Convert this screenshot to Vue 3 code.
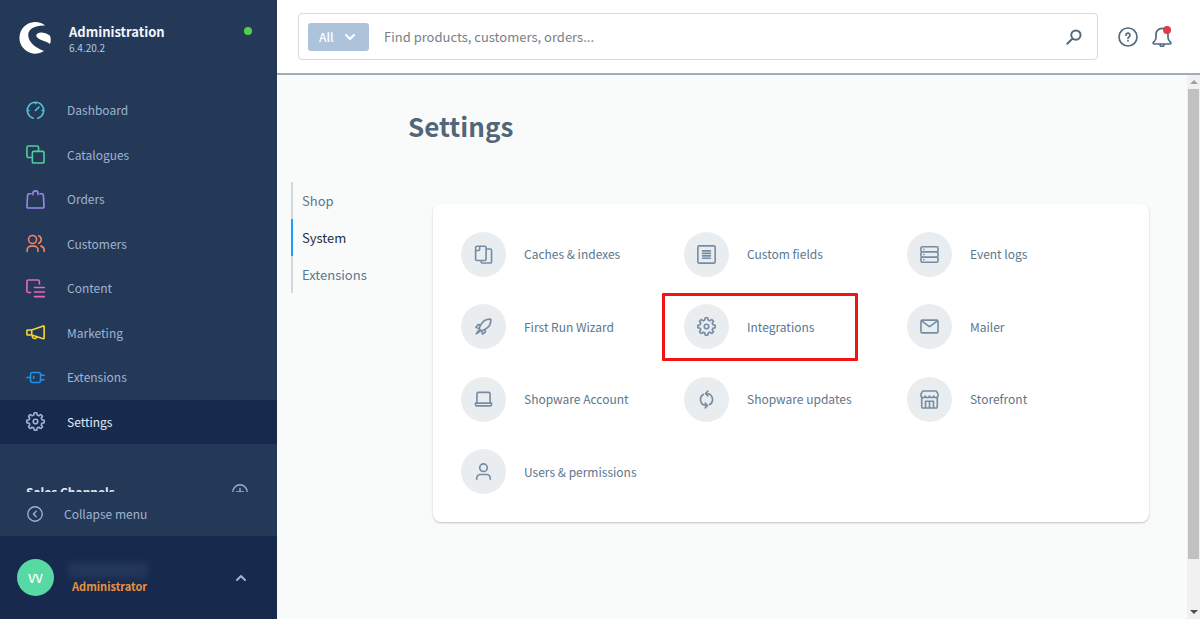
<script setup>
import { ref } from 'vue'

const point = (radius, degrees) => {
  const angle = (degrees * Math.PI) / 180
  return `${(10 + radius * Math.cos(angle)).toFixed(2)} ${(10 + radius * Math.sin(angle)).toFixed(2)}`
}

// eight rounded teeth with hollow valleys between them
const gear = Array.from({ length: 8 }, (_, i) => {
  const a = i * 45
  return `${i ? 'L' : 'M'}${point(7.4, a - 12)}Q${point(9.4, a - 11)} ${point(9.2, a - 5)}L${point(9.2, a + 5)}Q${point(9.4, a + 11)} ${point(7.4, a + 12)}Q${point(6.3, a + 22.5)} ${point(7.4, a + 33)}`
}).join('') + 'Z'

const icons = {
  gauge: 'M7.5 18.2A8.6 8.6 0 1 1 12.5 18.2M10 10l3.6-3.6M10 1.5v1.3M1.5 10h1.6M16.9 10h1.6',
  copy: 'M6.7 13.2H2.5A1.5 1.5 0 0 1 1 11.7V2.5A1.5 1.5 0 0 1 2.5 1h9.2a1.5 1.5 0 0 1 1.5 1.5v4.2M8.2 6.7h9.3A1.5 1.5 0 0 1 19 8.2v9.3a1.5 1.5 0 0 1-1.5 1.5H8.2a1.5 1.5 0 0 1-1.5-1.5V8.2a1.5 1.5 0 0 1 1.5-1.5z',
  bag: 'M5.3 4H3.2a1.5 1.5 0 0 0-1.5 1.4L1 17.3A1.6 1.6 0 0 0 2.6 19h14.8a1.6 1.6 0 0 0 1.6-1.7L18.3 5.4A1.5 1.5 0 0 0 16.8 4h-2.1M7.3 5V3.6a2.7 2.7 0 0 1 5.4 0V5',
  users: 'M6.9 1.6a4.2 4.2 0 1 1 0 8.4 4.2 4.2 0 0 1 0-8.4M1.2 18.3v-1.5a4 4 0 0 1 4-4h3.4a4 4 0 0 1 4 4v1.5M13.4 1.9a4.3 4.3 0 0 1 0 7.9M15.6 12.8a4.2 4.2 0 0 1 3.5 4v1.5',
  content: 'M4.8 14.2H2.6A1.6 1.6 0 0 1 1 12.6v-10A1.6 1.6 0 0 1 2.6 1h9.9a1.6 1.6 0 0 1 1.6 1.6v2.6M9 9h10.3M9 13.7h10.3M9 18.5h10.3',
  megaphone: 'M1.7 7.3H6v5.4H1.7a.7.7 0 0 1-.7-.7V8a.7.7 0 0 1 .7-.7zM6 7.3l12.2-4.2a.7.7 0 0 1 .9.7v12a.7.7 0 0 1-.9.7L6 12.7M6.6 13v1.3a2.5 2.5 0 0 0 4.8.5',
  plug: 'M.8 10h4M8.1 9v2M15.3 7.6h3.9M15.3 12.4h3.9M6.6 4.8h6.9a1.8 1.8 0 0 1 1.8 1.8v6.8a1.8 1.8 0 0 1-1.8 1.8H6.6a1.8 1.8 0 0 1-1.8-1.8V6.6a1.8 1.8 0 0 1 1.8-1.8z',
  gear: gear + 'M10 7.6a2.4 2.4 0 1 1 0 4.8 2.4 2.4 0 0 1 0-4.8',
  plus: 'M10 1a9 9 0 1 1 0 18 9 9 0 0 1 0-18M10 5.5v9M5.5 10h9',
  back: 'M10 1a9 9 0 1 1 0 18 9 9 0 0 1 0-18M11.5 6.5 8 10l3.5 3.5',
  search: 'M12.4 1.8a5.8 5.8 0 1 1 0 11.6 5.8 5.8 0 0 1 0-11.6M8.2 11.9 1.6 18.4',
  help: 'M10 1a9 9 0 1 1 0 18 9 9 0 0 1 0-18M8 8.2a2 2 0 1 1 3 1.7c-.7.4-1 .7-1 1.4M10 13.6v.2',
  bell: 'M10 1.3a6 6 0 0 0-6 6v3.3c0 1.9-.7 3.2-2.3 4.4-1 .8-.6 2 .6 2h15.4c1.2 0 1.6-1.2.6-2-1.6-1.2-2.3-2.5-2.3-4.4V7.3a6 6 0 0 0-6-6M8 17.5a2 2 0 0 0 4 0',
  documents: 'M6 1.3h5.2a1.5 1.5 0 0 1 1.5 1.5v12a1.5 1.5 0 0 1-1.5 1.5h-8a1.5 1.5 0 0 1-1.5-1.5V2.8a1.5 1.5 0 0 1 1.5-1.5zM1.9 5.8h2.8A1.3 1.3 0 0 0 6 4.5V1.4M12.7 4.2H17a1.5 1.5 0 0 1 1.5 1.5v11.8A1.5 1.5 0 0 1 17 19H9a1.5 1.5 0 0 1-1.5-1.5v-1.2',
  rocket: 'M17.7 2.3c.3 4.2-1.3 8-6 10.6L8 14.8 5.2 12l1.9-3.7c2.6-4.7 6.4-6.3 10.6-6zM7.1 8.3 4.2 8 2 11.1l3.4.8M11.7 12.9l.3 2.9L8.9 18l-.8-3.4M5 13.8 2.4 17.6 6.2 15',
  list: 'M2.4.9h15.2a1.5 1.5 0 0 1 1.5 1.5v15.2a1.5 1.5 0 0 1-1.5 1.5H2.4a1.5 1.5 0 0 1-1.5-1.5V2.4A1.5 1.5 0 0 1 2.4.9zM5.8 6.2h8.4M5.8 8.8h8.4M5.8 11.4h8.4M5.8 14h8.4',
  server: 'M2.5 1.8h15A1.5 1.5 0 0 1 19 3.3v2.4a1.5 1.5 0 0 1-1.5 1.5h-15A1.5 1.5 0 0 1 1 5.7V3.3a1.5 1.5 0 0 1 1.5-1.5zM2.5 7.2h15A1.5 1.5 0 0 1 19 8.7v2.6a1.5 1.5 0 0 1-1.5 1.5h-15A1.5 1.5 0 0 1 1 11.3V8.7a1.5 1.5 0 0 1 1.5-1.5zM2.5 12.8h15a1.5 1.5 0 0 1 1.5 1.5v2.4a1.5 1.5 0 0 1-1.5 1.5h-15A1.5 1.5 0 0 1 1 16.7v-2.4a1.5 1.5 0 0 1 1.5-1.5zM4 4.5h.1M4 10h.1M4 15.5h.1',
  mail: 'M2.5 3.3h15A1.5 1.5 0 0 1 19 4.8v10.4a1.5 1.5 0 0 1-1.5 1.5h-15A1.5 1.5 0 0 1 1 15.2V4.8a1.5 1.5 0 0 1 1.5-1.5zM1.4 3.9l7.7 5.7a1.5 1.5 0 0 0 1.8 0l7.7-5.7',
  laptop: 'M4.6 2.5h10.8a1.5 1.5 0 0 1 1.5 1.5v9.8H3.1V4a1.5 1.5 0 0 1 1.5-1.5zM1.5 13.8h17v1.4a1.5 1.5 0 0 1-1.5 1.5H3a1.5 1.5 0 0 1-1.5-1.5z',
  refresh: 'M6.6 4.7a6.3 6.3 0 0 0 3.4 11.6M8.6 13.8l2.5 2.5-2.5 2.5M13.4 15.3a6.3 6.3 0 0 0-3.4-11.6M11.4 1.2 8.9 3.7l2.5 2.5',
  store: 'M3 1h14l2 3.3v2a2.3 2.3 0 0 1-4.5 0 2.3 2.3 0 0 1-4.5 0 2.3 2.3 0 0 1-4.5 0 2.3 2.3 0 0 1-4.5 0v-2zM1.8 8.5v9A1.5 1.5 0 0 0 3.3 19h13.4a1.5 1.5 0 0 0 1.5-1.5v-9M5.8 19v-7.2h8.4V19M10 11.8V19',
  user: 'M10 2a4 4 0 1 1 0 8 4 4 0 0 1 0-8M2.9 18.2v-1.4a3.7 3.7 0 0 1 3.7-3.7h6.8a3.7 3.7 0 0 1 3.7 3.7v1.4',
}

const menu = [
  { label: 'Dashboard', icon: 'gauge', tone: 'cyan' },
  { label: 'Catalogues', icon: 'copy', tone: 'green' },
  { label: 'Orders', icon: 'bag', tone: 'violet' },
  { label: 'Customers', icon: 'users', tone: 'orange' },
  { label: 'Content', icon: 'content', tone: 'pink' },
  { label: 'Marketing', icon: 'megaphone', tone: 'yellow' },
  { label: 'Extensions', icon: 'plug', tone: 'blue' },
  { label: 'Settings', icon: 'gear', tone: 'grey' },
]

const tabs = ['Shop', 'System', 'Extensions']
const activeTab = ref('System')
const query = ref('')

const settings = [
  { label: 'Caches & indexes', icon: 'documents' },
  { label: 'Custom fields', icon: 'list' },
  { label: 'Event logs', icon: 'server' },
  { label: 'First Run Wizard', icon: 'rocket' },
  { label: 'Integrations', icon: 'gear', marked: true },
  { label: 'Mailer', icon: 'mail' },
  { label: 'Shopware Account', icon: 'laptop' },
  { label: 'Shopware updates', icon: 'refresh' },
  { label: 'Storefront', icon: 'store' },
  { label: 'Users & permissions', icon: 'user' },
]
</script>

<template>
  <div class="admin">
    <aside class="sidebar">
      <header class="brand">
        <svg class="logo" viewBox="57 65 97 97" aria-hidden="true">
          <path d="M137 76A48 48 0 1 0 133 153C112 144 86 130 85 105C84 86 108 74 137 76Z" />
          <path d="M109 107C109 95 132 92 151 107C154 115 154 124 151 132C140 122 116 123 109 107Z" />
        </svg>
        <div class="brand-text">
          <strong>Administration</strong>
          <span>6.4.20.2</span>
        </div>
        <span class="status"></span>
      </header>

      <div class="menu-scroll">
        <nav class="menu" aria-label="Main">
          <a
            v-for="item in menu"
            :key="item.label"
            href="#"
            class="menu-item"
            :class="{ active: item.label === 'Settings' }"
          >
            <svg class="icon" :class="item.tone" viewBox="0 0 20 20" aria-hidden="true"><path :d="icons[item.icon]" /></svg>
            <span>{{ item.label }}</span>
          </a>
        </nav>
        <div class="channels">
          <strong>Sales Channels</strong>
          <button type="button" aria-label="Add sales channel">
            <svg class="icon" viewBox="0 0 20 20" aria-hidden="true"><path :d="icons.plus" /></svg>
          </button>
        </div>
      </div>

      <button type="button" class="collapse">
        <svg class="icon" viewBox="0 0 20 20" aria-hidden="true"><path :d="icons.back" /></svg>
        <span>Collapse menu</span>
      </button>

      <button type="button" class="account">
        <span class="avatar">VV</span>
        <span class="account-text">
          <span class="account-name"></span>
          <span class="account-role">Administrator</span>
        </span>
        <svg class="chevron" viewBox="0 0 12 12" aria-hidden="true"><path d="M2 8l4-4 4 4" /></svg>
      </button>
    </aside>

    <div class="page">
      <header class="topbar">
        <div class="search">
          <button type="button" class="scope">
            <span>All</span>
            <svg class="chevron" viewBox="0 0 12 12" aria-hidden="true"><path d="M2 4l4 4 4-4" /></svg>
          </button>
          <input v-model="query" type="text" aria-label="Search" placeholder="Find products, customers, orders..." />
          <button type="button" class="plain find" aria-label="Start search">
            <svg class="icon" viewBox="0 0 20 20" aria-hidden="true"><path :d="icons.search" /></svg>
          </button>
        </div>
        <button type="button" class="plain" aria-label="Help">
          <svg class="icon" viewBox="0 0 20 20" aria-hidden="true"><path :d="icons.help" /></svg>
        </button>
        <button type="button" class="plain bell" aria-label="Notifications">
          <svg class="icon" viewBox="0 0 20 20" aria-hidden="true"><path :d="icons.bell" /></svg>
          <span class="badge"></span>
        </button>
      </header>

      <div class="body">
        <main class="content">
          <h1>Settings</h1>
          <div class="columns">
            <nav class="tabs" aria-label="Settings sections">
              <a
                v-for="tab in tabs"
                :key="tab"
                href="#"
                :class="{ active: tab === activeTab }"
                @click.prevent="activeTab = tab"
              >{{ tab }}</a>
            </nav>
            <section class="card">
              <a
                v-for="item in settings"
                :key="item.label"
                href="#"
                class="tile"
                :class="{ marked: item.marked }"
              >
                <span class="tile-icon">
                  <svg class="icon" viewBox="0 0 20 20" aria-hidden="true"><path :d="icons[item.icon]" /></svg>
                </span>
                <span>{{ item.label }}</span>
              </a>
            </section>
          </div>
        </main>
        <div class="scrollbar" aria-hidden="true">
          <span class="arrow up"></span>
          <span class="track"><span class="thumb"></span></span>
          <span class="arrow down"></span>
        </div>
      </div>
    </div>
  </div>
</template>

<style>
body {
  margin: 0;
}
</style>

<style scoped>
.admin {
  display: flex;
  height: 100vh;
  font-family: "Noto Sans CJK SC", "Noto Sans", sans-serif;
  font-size: 12px;
  line-height: 16px;
  color: #5c768c;
  background: #f9fbfb;
}

.admin *,
.admin *::before,
.admin *::after {
  box-sizing: border-box;
}

a {
  color: inherit;
  text-decoration: none;
}

button,
input {
  padding: 0;
  border: 0;
  background: none;
  font: inherit;
  color: inherit;
  text-align: left;
}

button {
  cursor: pointer;
}

.icon {
  display: block;
  flex: none;
  width: 20px;
  height: 20px;
  fill: none;
  stroke: currentColor;
  stroke-width: 1.7;
  stroke-linecap: round;
  stroke-linejoin: round;
}

.chevron {
  flex: none;
  width: 12px;
  height: 12px;
  fill: none;
  stroke: currentColor;
  stroke-width: 2;
  stroke-linecap: round;
  stroke-linejoin: round;
}

/* sidebar */
.sidebar {
  display: flex;
  flex: none;
  flex-direction: column;
  width: 277px;
  color: #9fb4d2;
  background: #243858;
}

.brand {
  display: flex;
  flex: none;
  align-items: flex-start;
  height: 88px;
  padding: 22px 25px 0 19px;
}

.logo {
  width: 32px;
  height: 32px;
  margin-right: 18px;
  fill: #fff;
}

.brand-text {
  display: flex;
  flex: 1;
  flex-direction: column;
}

.brand-text strong {
  font-size: 13px;
  line-height: 20px;
  color: #f2f5fa;
}

.brand-text span {
  font-size: 10px;
  line-height: 12px;
  color: #b9c8de;
}

.status {
  width: 8px;
  height: 8px;
  margin-top: 5px;
  border-radius: 50%;
  background: #53d048;
}

.menu-scroll {
  flex: 1;
  min-height: 0;
  overflow: hidden;
}

.menu {
  display: grid;
  grid-auto-rows: 1fr;
  min-height: 356px;
}

.menu-item {
  display: flex;
  align-items: center;
  gap: 22px;
  padding-left: 26px;
}

.menu-item .icon,
.tile .icon {
  width: 19px;
  height: 19px;
}

.menu-item.active {
  color: #e4ebf5;
  background: #172a4e;
}

.cyan { color: #56bfdc; }
.green { color: #4fd09a; }
.violet { color: #9a87ea; }
.orange { color: #ee8460; }
.pink { color: #ea66bd; }
.yellow { color: #f5d733; }
.blue { color: #1d92ec; }
.grey { color: #9fb4d2; }

.channels {
  display: flex;
  align-items: center;
  justify-content: space-between;
  padding: 40px 29px 0 26px;
}

.channels strong {
  color: #e4ebf5;
}

.channels .icon {
  width: 16px;
  height: 16px;
}

.collapse {
  display: flex;
  flex: none;
  align-items: center;
  gap: 21px;
  height: 44px;
  padding-left: 27px;
}

.collapse .icon {
  width: 16px;
  height: 16px;
}

.account {
  display: flex;
  flex: none;
  align-items: center;
  height: 83px;
  padding: 0 30px 0 17px;
  background: #172a4e;
}

.avatar {
  width: 37px;
  height: 37px;
  border-radius: 50%;
  font-weight: 500;
  line-height: 37px;
  text-align: center;
  color: #fff;
  background: #57d9a3;
}

.account-text {
  display: flex;
  flex: 1;
  flex-direction: column;
  margin-left: 14px;
}

.account-name {
  width: 80px;
  height: 16px;
  border-radius: 4px;
  background: #23375a;
  filter: blur(3px);
}

.account-role {
  margin-left: 4px;
  font-size: 11px;
  font-weight: 700;
  color: #e8913f;
}

/* top bar */
.topbar {
  display: flex;
  flex: none;
  align-items: center;
  height: 75px;
  padding: 0 28px 0 21px;
  border-bottom: 2px solid #a0abbd;
  background: #fff;
}

.page {
  display: flex;
  flex: 1;
  flex-direction: column;
  min-width: 0;
}

.search {
  display: flex;
  flex: 1;
  align-items: center;
  height: 47px;
  margin-right: 20px;
  padding: 0 15px 0 9px;
  border: 1px solid #d3dae0;
  border-radius: 4px;
}

.scope {
  display: flex;
  align-items: center;
  justify-content: space-between;
  width: 61px;
  height: 28px;
  padding: 0 13px 0 11px;
  border-radius: 3px;
  color: #fff;
  font-weight: 500;
  background: #adc3dc;
}

.search input {
  flex: 1;
  min-width: 0;
  height: 28px;
  margin-left: 15px;
  font-size: 13px;
  outline: none;
}

.search input::placeholder {
  color: #7b7f84;
  opacity: 1;
}

.plain {
  color: #53697f;
}

.find .icon {
  width: 16px;
  height: 16px;
  stroke-width: 2.4;
}

.bell {
  position: relative;
  margin-left: 14px;
}

.badge {
  position: absolute;
  top: -1px;
  right: 1px;
  width: 8px;
  height: 8px;
  border-radius: 50%;
  background: #e03a48;
}

/* content */
.body {
  display: flex;
  flex: 1;
  min-height: 0;
}

.content {
  flex: 1;
  min-width: 0;
  padding: 31px 38px 32px 14px;
  overflow: hidden;
}

h1 {
  margin: 0 0 36px 117px;
  font-size: 26px;
  font-weight: 700;
  line-height: 40px;
  color: #52667a;
}

.columns {
  display: flex;
  align-items: flex-start;
}

.tabs {
  display: flex;
  flex: none;
  flex-direction: column;
  width: 142px;
  font-size: 13px;
}

.tabs a {
  height: 37px;
  padding-left: 9px;
  border-left: 2px solid #d1d9e0;
  line-height: 37px;
}

.tabs a.active {
  border-color: #189eff;
  color: #1f2c3a;
}

.card {
  display: grid;
  flex: 1;
  grid-template-columns: repeat(3, 1fr);
  grid-auto-rows: 1fr;
  min-height: 318px;
  margin-top: 22px;
  padding: 14px 19px 14px 28px;
  border-radius: 8px;
  background: #fff;
  box-shadow: 0 1px 2px rgba(40, 50, 60, 0.28);
}

.tile {
  display: flex;
  position: relative;
  align-items: center;
  gap: 18px;
}

.tile-icon {
  display: grid;
  flex: none;
  place-items: center;
  width: 45px;
  height: 45px;
  border-radius: 50%;
  color: #758ca3;
  background: #e9edf0;
}

.tile.marked::after {
  content: "";
  position: absolute;
  inset: 2px 49px 2px -22px;
  border: 3px solid #f01414;
  border-radius: 1px;
}

/* scrollbar */
.scrollbar {
  display: flex;
  flex: none;
  flex-direction: column;
  width: 13px;
  background: #f1f1f1;
}

.arrow {
  display: grid;
  place-items: center;
  height: 14px;
}

.arrow::before {
  content: "";
  border: 4px solid transparent;
}

.arrow.up::before {
  border-top-width: 0;
  border-bottom-color: #a0a0a0;
}

.arrow.down::before {
  border-bottom-width: 0;
  border-top-color: #505050;
}

.track {
  display: flex;
  flex: 1;
  padding: 0 1px;
}

.thumb {
  flex: 1;
  height: 91%;
  background: #c1c1c1;
}
</style>
